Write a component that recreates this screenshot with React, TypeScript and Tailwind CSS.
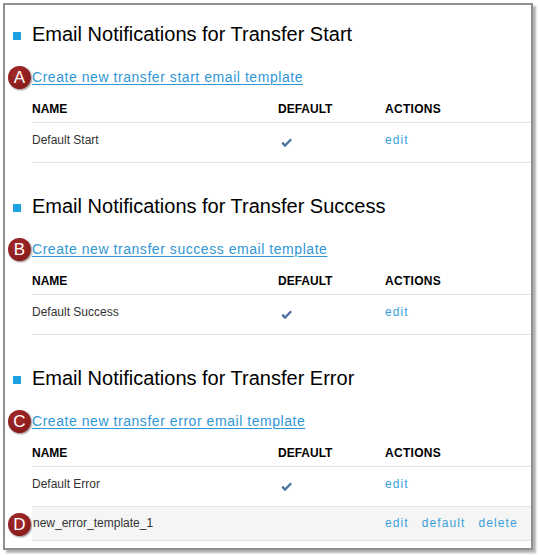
const sections = [
  {
    title: "Email Notifications for Transfer Start",
    badge: "A",
    link: "Create new transfer start email template",
    rows: [{ name: "Default Start", isDefault: true, actions: ["edit"] }],
  },
  {
    title: "Email Notifications for Transfer Success",
    badge: "B",
    link: "Create new transfer success email template",
    rows: [{ name: "Default Success", isDefault: true, actions: ["edit"] }],
  },
  {
    title: "Email Notifications for Transfer Error",
    badge: "C",
    link: "Create new transfer error email template",
    rows: [
      { name: "Default Error", isDefault: true, actions: ["edit"] },
      { name: "new_error_template_1", isDefault: false, actions: ["edit", "default", "delete"], badge: "D" },
    ],
  },
];

function Badge({ letter }: { letter: string }) {
  return (
    <span className="ml-[3px] flex h-[23px] w-[23px] items-center justify-center rounded-full bg-[radial-gradient(circle_at_40%_35%,#a52a2a,#7d1616)] text-[17px] leading-none text-white shadow-[1px_1px_2px_rgba(0,0,0,0.45)]">
      {letter}
    </span>
  );
}

function Check() {
  return (
    <svg className="ml-[3px] mt-[6px] block" width="11" height="9" viewBox="0 0 11 9">
      <path d="M1.2 4.6 L4 7.6 L10.2 1.2" fill="none" stroke="#4f6f9f" strokeWidth="2.3" strokeLinejoin="miter" />
    </svg>
  );
}

export default function App() {
  return (
    <div className="min-h-[555px] bg-white font-['Liberation_Sans',Arial,sans-serif]">
      <div className="ml-[3px] mt-[3px] w-[530px] border-2 border-[#8f8f8f] bg-white pb-[7px] shadow-[3px_3px_2px_rgba(0,0,0,0.3)]">
        {sections.map((s, si) => (
          <section key={si} className={si === 0 ? "pt-[17px]" : "pt-[31px]"}>
            {/* heading */}
            <div className="flex h-[24px]">
              <div className="w-[27px] shrink-0">
                <span className="ml-[8px] mt-[10px] block h-[8px] w-[8px] bg-[#1a9fe0]" />
              </div>
              <h2 className="text-[20px] leading-[24px] text-black">{s.title}</h2>
            </div>

            {/* create link */}
            <div className="mt-[22px] flex h-[18px] items-center">
              <div className="flex w-[27px] shrink-0 items-center">
                <Badge letter={s.badge} />
              </div>
              <a className="text-[14px] leading-[18px] tracking-[0.55px] text-[#2f97d6] underline decoration-1 underline-offset-[2px]">
                {s.link}
              </a>
            </div>

            {/* table */}
            <div className="ml-[27px]">
              <div className="grid grid-cols-[246px_107px_1fr] border-b border-[#e4e4e4] pb-[5px] pt-[15px] text-[12px] font-bold leading-[16px] text-black">
                <div>NAME</div>
                <div>DEFAULT</div>
                <div className="tracking-[0.3px]">ACTIONS</div>
              </div>
              {s.rows.map((r, ri) => (
                <div key={ri} className={r.badge ? "-ml-[27px] flex" : ""}>
                  {r.badge && (
                    <div className="flex w-[27px] shrink-0 items-center">
                      <Badge letter={r.badge} />
                    </div>
                  )}
                  <div
                    className={
                      r.badge
                        ? "grid flex-1 grid-cols-[246px_107px_1fr] border-b border-[#e4e4e4] bg-[#f5f5f5] pb-[9px] pt-[8px] text-[12px] leading-[16px]"
                        : "grid grid-cols-[246px_107px_1fr] border-b border-[#e4e4e4] pb-[14px] pt-[9px] text-[12px] leading-[16px]"
                    }
                  >
                    <div className={r.badge ? "pl-px text-[#333]" : "text-[#333]"}>{r.name}</div>
                    <div>{r.isDefault && <Check />}</div>
                    <div className="flex gap-[13px] tracking-[1.1px] text-[#3b9fdb]">
                      {r.actions.map((a) => (
                        <span key={a}>{a}</span>
                      ))}
                    </div>
                  </div>
                </div>
              ))}
            </div>
          </section>
        ))}
      </div>
    </div>
  );
}
